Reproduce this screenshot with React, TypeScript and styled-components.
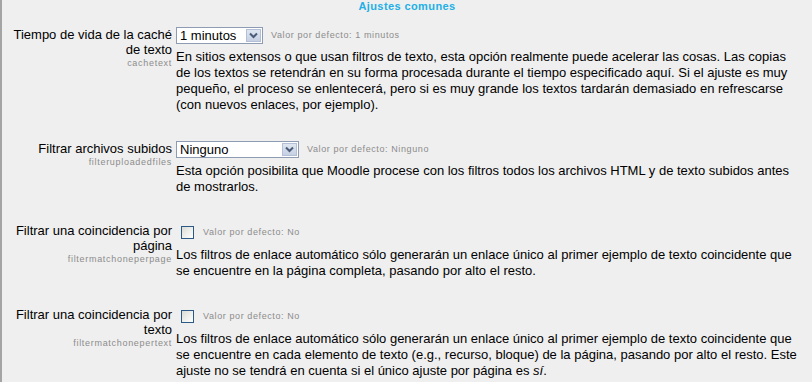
import React from 'react';
import styled, { createGlobalStyle } from 'styled-components';

const GlobalStyle = createGlobalStyle`
  html, body {
    margin: 0;
    padding: 0;
    background: #efefef;
  }
  body {
    font-family: "Liberation Sans", Arial, sans-serif;
    color: #000;
  }
`;

const Page = styled.div`
  border-left: 2px solid #a4a4a4;
  min-height: 382px;
  box-sizing: border-box;
  overflow: hidden;
`;

const Title = styled.h3`
  margin: 0;
  height: 12px;
  line-height: 12px;
  text-align: center;
  font-size: 11px;
  font-weight: bold;
  letter-spacing: 0.4px;
  color: #22b0e6;
`;

const Settings = styled.div`
  display: flex;
  flex-direction: column;
  gap: 26px;
  margin-top: 13px;
`;

const Row = styled.div`
  display: grid;
  grid-template-columns: 170px 1fr;
  column-gap: 4px;
`;

const Label = styled.div`
  text-align: right;
  padding-top: 2px;
  font-size: 13px;
  line-height: 15px;
`;

const Name = styled.div`
  font-size: 9px;
  line-height: 13px;
  letter-spacing: 0.7px;
  color: #8c8c8c;
`;

const Field = styled.div`
  display: flex;
  flex-direction: column;
`;

const Control = styled.div<{ $tall?: boolean }>`
  display: flex;
  align-items: center;
  height: ${p => (p.$tall ? 22 : 20)}px;
  gap: 8px;
`;

const Select = styled.div<{ $width: number }>`
  display: flex;
  align-items: stretch;
  width: ${p => p.$width}px;
  height: 17px;
  box-sizing: border-box;
  border: 1px solid #8d9bb3;
  background: #fff;
`;

const SelectValue = styled.span`
  flex: 1;
  padding-left: 3px;
  font-size: 13px;
  line-height: 15px;
`;

const SelectButton = styled.span`
  width: 15px;
  margin: 1px;
  box-sizing: border-box;
  border: 1px solid #b3bfd6;
  background: linear-gradient(#dfe6f1, #c5d0e3);
  display: flex;
  align-items: center;
  justify-content: center;
`;

const Checkbox = styled.span`
  width: 13px;
  height: 13px;
  margin-left: 5px;
  margin-right: 1px;
  box-sizing: border-box;
  border: 1px solid #2a5a85;
  background: linear-gradient(135deg, #dcdcd6, #fff);
`;

const Default = styled.span`
  font-size: 9px;
  letter-spacing: 0.6px;
  color: #8c8c8c;
`;

const Description = styled.div`
  width: 626px;
  margin-top: 4px;
  font-size: 13px;
  line-height: 16px;
`;

const Chevron = () => (
  <svg width="9" height="7" viewBox="0 0 9 7">
    <path d="M1 1.5 L4.5 5 L8 1.5" fill="none" stroke="#4b5b78" strokeWidth="2" />
  </svg>
);

type SelectProps = { value: string; width: number };

const Dropdown = ({ value, width }: SelectProps) => (
  <Select $width={width}>
    <SelectValue>{value}</SelectValue>
    <SelectButton>
      <Chevron />
    </SelectButton>
  </Select>
);

const App = () => {
  return (
    <Page>
      <GlobalStyle />
      <Title>Ajustes comunes</Title>
      <Settings>
        <Row>
          <Label>
            Tiempo de vida de la caché de texto
            <Name>cachetext</Name>
          </Label>
          <Field>
            <Control>
              <Dropdown value="1 minutos" width={87} />
              <Default>Valor por defecto: 1 minutos</Default>
            </Control>
            <Description>
              En sitios extensos o que usan filtros de texto, esta opción realmente puede acelerar las
              cosas. Las copias de los textos se retendrán en su forma procesada durante el tiempo
              especificado aquí. Si el ajuste es muy pequeño, el proceso se enlentecerá, pero si es
              muy grande los textos tardarán demasiado en refrescarse (con nuevos enlaces, por
              ejemplo).
            </Description>
          </Field>
        </Row>

        <Row>
          <Label>
            Filtrar archivos subidos
            <Name>filteruploadedfiles</Name>
          </Label>
          <Field>
            <Control>
              <Dropdown value="Ninguno" width={123} />
              <Default>Valor por defecto: Ninguno</Default>
            </Control>
            <Description>
              Esta opción posibilita que Moodle procese con los filtros todos los archivos HTML y de
              texto subidos antes de mostrarlos.
            </Description>
          </Field>
        </Row>

        <Row>
          <Label>
            Filtrar una coincidencia por página
            <Name>filtermatchoneperpage</Name>
          </Label>
          <Field>
            <Control $tall>
              <Checkbox />
              <Default>Valor por defecto: No</Default>
            </Control>
            <Description>
              Los filtros de enlace automático sólo generarán un enlace único al primer ejemplo de
              texto coincidente que se encuentre en la página completa, pasando por alto el resto.
            </Description>
          </Field>
        </Row>

        <Row>
          <Label>
            Filtrar una coincidencia por texto
            <Name>filtermatchonepertext</Name>
          </Label>
          <Field>
            <Control $tall>
              <Checkbox />
              <Default>Valor por defecto: No</Default>
            </Control>
            <Description>
              Los filtros de enlace automático sólo generarán un enlace único al primer ejemplo de
              texto coincidente que se encuentre en cada elemento de texto (e.g., recurso, bloque) de
              la página, pasando por alto el resto. Este ajuste no se tendrá en cuenta si el único
              ajuste por página es <i>sí</i>.
            </Description>
          </Field>
        </Row>
      </Settings>
    </Page>
  );
};

export default App;
